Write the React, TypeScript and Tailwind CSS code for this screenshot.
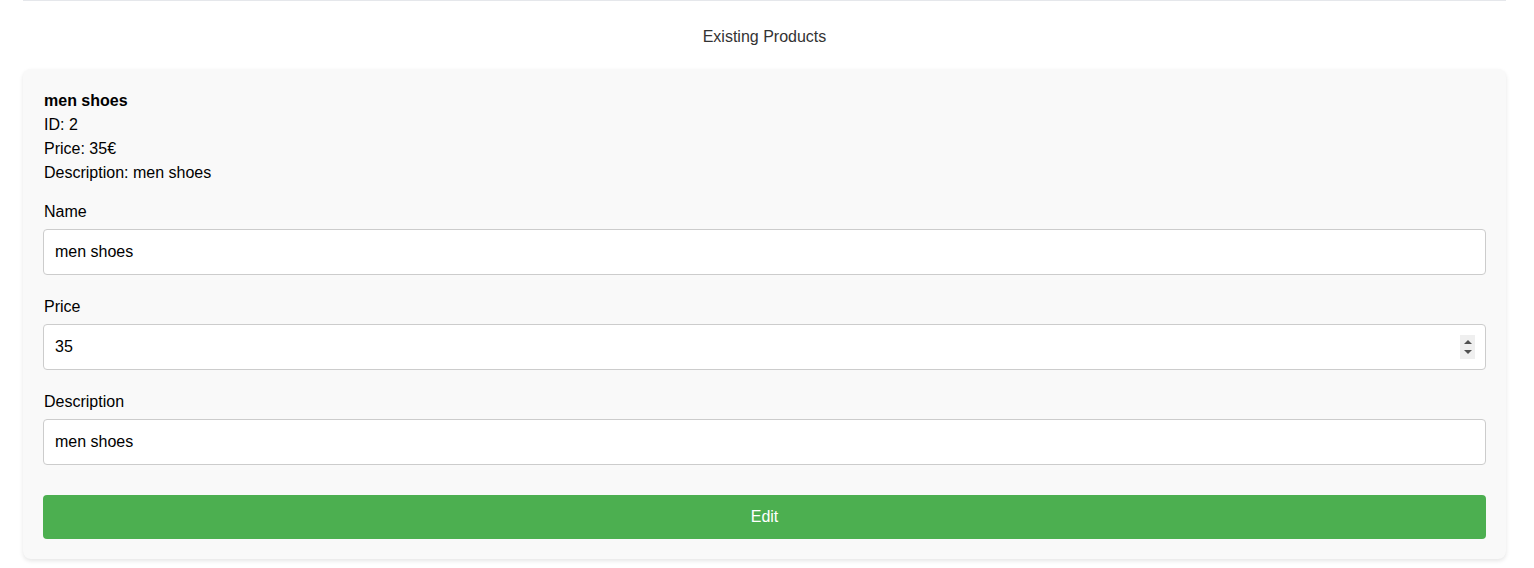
import React from "react";

export default function App() {
  const font = { fontFamily: '"Liberation Sans", Arial, sans-serif' };
  const inputCls =
    "block w-full h-[46px] border border-[#ccc] rounded bg-white px-[11px] text-base outline-none";
  return (
    <div className="min-h-screen bg-white text-black" style={font}>
      <div className="pl-[23px] pr-[28px]">
        <div className="border-t border-[#e5e7eb]" />
        <h2 className="h-[68px] flex items-center justify-center text-base font-normal text-[#333] pt-[3px]">
          Existing Products
        </h2>
        <div className="bg-[#f9f9f9] rounded-lg shadow-[0_2px_4px_rgba(0,0,0,0.1)] px-5 pt-5 pb-5">
          <div className="text-base leading-6 mb-[15px] pl-px">
            <div className="font-bold">men shoes</div>
            <div>ID: 2</div>
            <div>Price: 35€</div>
            <div>Description: men shoes</div>
          </div>
          <label className="block text-base leading-6 mb-[5px] pl-px">Name</label>
          <input type="text" defaultValue="men shoes" className={inputCls + " mb-[20px]"} style={font} />
          <label className="block text-base leading-6 mb-[5px] pl-px">Price</label>
          <div className="relative mb-[20px]">
            <input
              type="text"
              inputMode="numeric"
              defaultValue="35"
              className={inputCls}
              style={font}
            />
            <div className="absolute right-[11px] top-[11px] w-[15px] h-[24px] bg-[#efefef] flex flex-col items-center justify-center gap-[6px]">
              <svg width="8" height="4" viewBox="0 0 8 4">
                <path d="M0 4 L4 0 L8 4 Z" fill="#505050" />
              </svg>
              <svg width="8" height="4" viewBox="0 0 8 4">
                <path d="M0 0 L4 4 L8 0 Z" fill="#505050" />
              </svg>
            </div>
          </div>
          <label className="block text-base leading-6 mb-[5px] pl-px">Description</label>
          <input type="text" defaultValue="men shoes" className={inputCls + " mb-[30px]"} style={font} />
          <button
            className="block w-full h-[44px] rounded bg-[#4caf50] text-white text-base"
            style={font}
          >
            Edit
          </button>
        </div>
      </div>
    </div>
  );
}
